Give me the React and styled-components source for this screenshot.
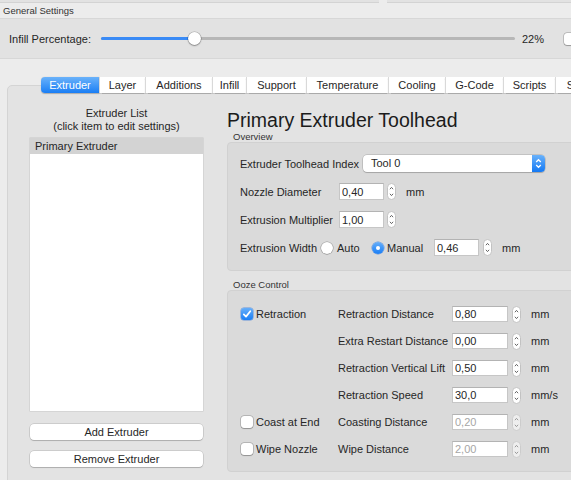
import React from 'react';
import styled, { createGlobalStyle } from 'styled-components';

const Global = createGlobalStyle`
  html, body { margin: 0; padding: 0; background: #ececec; overflow: hidden; }
  body { font-family: "Liberation Sans", Arial, sans-serif; font-size: 11px; color: #262626; }
  * { box-sizing: border-box; }
`;

const Window = styled.div`
  width: 571px;
  height: 480px;
  overflow: hidden;
  background: #ececec;
  display: flex;
  flex-direction: column;
`;

const TopStrip = styled.div`
  display: flex;
  gap: 8px;
  height: 3px;
  flex: none;
`;

const StripBox = styled.div`
  flex: ${p => (p.$w ? 'none' : '1')};
  width: ${p => (p.$w ? `${p.$w}px` : 'auto')};
  background: #e2e2e2;
  border-bottom: 1px solid #d3d3d3;
`;

const Caption = styled.div`
  font-size: 9.5px;
  line-height: ${p => p.$lh || 11}px;
  color: #333;
  padding-left: ${p => p.$pl || 0}px;
  margin-top: ${p => p.$mt || 0}px;
  flex: none;
  white-space: nowrap;
`;

const GeneralBox = styled.div`
  height: 41px;
  flex: none;
  background: #e2e2e2;
  border-top: 1px solid #d7d7d7;
  border-bottom: 1px solid #d7d7d7;
  display: flex;
  align-items: center;
  padding-left: 9px;
`;

const GenLabel = styled.div`
  width: 92px;
  flex: none;
  white-space: nowrap;
`;

const SliderTrack = styled.div`
  position: relative;
  width: 414px;
  height: 3px;
  flex: none;
  border-radius: 2px;
  background: #b7b7b7;
`;

const SliderFill = styled.div`
  height: 100%;
  border-radius: 2px;
  background: #3a8bf6;
`;

const SliderKnob = styled.div`
  position: absolute;
  top: -5px;
  width: 13px;
  height: 13px;
  margin-left: -6.5px;
  border-radius: 50%;
  background: #fff;
  box-shadow: 0 0 0 0.5px rgba(0, 0, 0, 0.25), 0 1px 1.5px rgba(0, 0, 0, 0.3);
`;

const Percent = styled.div`
  margin-left: 7px;
  width: 20px;
  flex: none;
`;

const PlainBox = styled.div`
  margin-left: 22px;
  width: 12px;
  height: 12px;
  flex: none;
  border-radius: 3px;
  background: #fff;
  box-shadow: 0 0 0 0.5px rgba(0, 0, 0, 0.3), 0 0.5px 1px rgba(0, 0, 0, 0.2);
`;

const Tabs = styled.div`
  display: flex;
  margin: 18px 0 -8px 41px;
  height: 16px;
  flex: none;
  position: relative;
  z-index: 1;
`;

const Tab = styled.div`
  width: ${p => p.$w}px;
  height: 16px;
  flex: none;
  display: flex;
  align-items: center;
  justify-content: center;
  white-space: nowrap;
  background: ${p => (p.$active ? 'linear-gradient(#6ab2fa, #1a7ef5)' : '#fff')};
  color: ${p => (p.$active ? '#fff' : '#262626')};
  border-left: ${p => (p.$active ? 'none' : '1px solid #d9d9d9')};
  box-shadow: 0 0.5px 1px rgba(0, 0, 0, 0.25);
  &:first-child {
    border-radius: 4px 0 0 4px;
  }
`;

const Panel = styled.div`
  margin-left: 7px;
  width: 640px;
  flex: 1 0 auto;
  min-height: 420px;
  background: #e3e3e3;
  border: 1px solid #d4d4d4;
  border-radius: 5px;
  display: grid;
  grid-template-columns: 173px 1fr;
  column-gap: 24px;
  align-items: start;
  padding: 21px 0 0 22px;
`;

const LeftCol = styled.div`
  display: flex;
  flex-direction: column;
`;

const ListTitle = styled.div`
  text-align: center;
  line-height: 13px;
`;

const ListBox = styled.div`
  margin-top: 5px;
  height: 273px;
  background: #fff;
  box-shadow: 0 0 0 0.5px rgba(0, 0, 0, 0.12);
`;

const ListItem = styled.div`
  height: 16px;
  line-height: 16px;
  padding-left: 5px;
  background: ${p => (p.$selected ? '#d3d3d3' : 'transparent')};
`;

const Button = styled.div`
  margin-top: ${p => p.$mt}px;
  height: 16px;
  line-height: 16px;
  text-align: center;
  background: #fff;
  border-radius: 4px;
  box-shadow: 0 0 0 0.5px rgba(0, 0, 0, 0.2), 0 1px 1px rgba(0, 0, 0, 0.15);
`;

const RightCol = styled.div`
  display: flex;
  flex-direction: column;
  min-width: 0;
`;

const Title = styled.div`
  margin-top: 2px;
  font-size: 19.5px;
  line-height: 22px;
  color: #1b1b1b;
  white-space: nowrap;
`;

const Group = styled.div`
  background: #dadada;
  border: 1px solid #d1d1d1;
  border-radius: 4px;
  display: flex;
  flex-direction: column;
  gap: 11px;
  padding: ${p => p.$pad};
`;

const Row = styled.div`
  display: flex;
  align-items: center;
  height: ${p => p.$h}px;
  white-space: nowrap;
`;

const Label = styled.div`
  width: ${p => (p.$w ? `${p.$w}px` : 'auto')};
  margin-left: ${p => p.$ml || 0}px;
  flex: none;
  white-space: nowrap;
`;

const Popup = styled.div`
  width: 182px;
  height: 17px;
  display: flex;
  background: #fff;
  border-radius: 4px;
  box-shadow: 0 0 0 0.5px rgba(0, 0, 0, 0.22), 0 1px 1px rgba(0, 0, 0, 0.15);
  overflow: hidden;
`;

const PopupText = styled.div`
  flex: 1;
  padding-left: 8px;
  line-height: 17px;
`;

const PopupArrow = styled.div`
  width: 13px;
  height: 17px;
  flex: none;
  background: linear-gradient(#69b1fa, #1479f4);
  display: flex;
`;

const NumInput = styled.input`
  width: ${p => p.$w}px;
  height: ${p => p.$h}px;
  flex: none;
  margin: 0 0 0 ${p => p.$ml || 0}px;
  padding: 0 0 0 2px;
  font: inherit;
  font-size: 11px;
  color: ${p => (p.disabled ? '#a6a6a6' : '#262626')};
  background: #fff;
  border: 1px solid #c6c6c6;
  border-top-color: #b3b3b3;
  border-radius: 0;
  outline: none;
`;

const StepperWrap = styled.div`
  margin-left: ${p => p.$ml}px;
  width: 9px;
  height: 17px;
  flex: none;
  display: flex;
  opacity: ${p => (p.$off ? 0.55 : 1)};
`;

const Unit = styled.div`
  margin-left: 10px;
  flex: none;
`;

const Radio = styled.div`
  width: 12px;
  height: 12px;
  flex: none;
  border-radius: 50%;
  display: flex;
  align-items: center;
  justify-content: center;
  background: ${p => (p.$on ? 'linear-gradient(#66aef9, #1a7ef5)' : '#fff')};
  box-shadow: ${p =>
    p.$on ? '0 0 0 0.5px rgba(20, 100, 220, 0.6)' : '0 0 0 0.5px rgba(0, 0, 0, 0.3), 0 0.5px 1px rgba(0, 0, 0, 0.2)'};
  &::after {
    content: '';
    display: ${p => (p.$on ? 'block' : 'none')};
    width: 4px;
    height: 4px;
    border-radius: 50%;
    background: #fff;
  }
`;

const CheckCell = styled.div`
  width: 97px;
  flex: none;
  display: flex;
  align-items: center;
  gap: 3px;
`;

const CheckBox = styled.div`
  width: 12px;
  height: 12px;
  flex: none;
  border-radius: 3px;
  display: flex;
  background: ${p => (p.$on ? 'linear-gradient(#66aef9, #1a7ef5)' : '#fff')};
  box-shadow: ${p =>
    p.$on ? '0 0 0 0.5px rgba(20, 100, 220, 0.6)' : '0 0 0 0.5px rgba(0, 0, 0, 0.3), 0 0.5px 1px rgba(0, 0, 0, 0.2)'};
`;

const Stepper = ({ ml, off }) => (
  <StepperWrap $ml={ml} $off={off}>
    <svg width="9" height="17" viewBox="0 0 9 17">
      <rect x="0.5" y="0.5" width="8" height="16" rx="4" fill="#fff" stroke="#c2c2c2" />
      <path d="M2.9 6.2 L4.5 4.4 L6.1 6.2" fill="none" stroke="#555" strokeWidth="0.9" />
      <path d="M2.9 10.8 L4.5 12.6 L6.1 10.8" fill="none" stroke="#555" strokeWidth="0.9" />
    </svg>
  </StepperWrap>
);

const Check = ({ on }) => (
  <CheckBox $on={on}>
    {on && (
      <svg width="12" height="12" viewBox="0 0 12 12">
        <path d="M2.8 6.3 L5 8.6 L9.3 3.2" fill="none" stroke="#fff" strokeWidth="1.7" strokeLinecap="round" strokeLinejoin="round" />
      </svg>
    )}
  </CheckBox>
);

const tabs = [
  ['Extruder', 58],
  ['Layer', 46],
  ['Additions', 67],
  ['Infill', 34],
  ['Support', 60],
  ['Temperature', 82],
  ['Cooling', 57],
  ['G-Code', 58],
  ['Scripts', 52],
  ['Speeds', 60],
];

const ooze = [
  { check: 'Retraction', on: true, label: 'Retraction Distance', value: '0,80', unit: 'mm' },
  { label: 'Extra Restart Distance', value: '0,00', unit: 'mm' },
  { label: 'Retraction Vertical Lift', value: '0,50', unit: 'mm' },
  { label: 'Retraction Speed', value: '30,0', unit: 'mm/s' },
  { check: 'Coast at End', on: false, label: 'Coasting Distance', value: '0,20', unit: 'mm', off: true },
  { check: 'Wipe Nozzle', on: false, label: 'Wipe Distance', value: '2,00', unit: 'mm', off: true },
];

export default function App() {
  const infill = 22.7;
  return (
    <Window>
      <Global />
      <TopStrip>
        <StripBox $w={379} />
        <StripBox />
      </TopStrip>
      <Caption $lh={15} $pl={3}>General Settings</Caption>
      <GeneralBox>
        <GenLabel>Infill Percentage:</GenLabel>
        <SliderTrack>
          <SliderFill style={{ width: `${infill}%` }} />
          <SliderKnob style={{ left: `${infill}%` }} />
        </SliderTrack>
        <Percent>22%</Percent>
        <PlainBox />
      </GeneralBox>

      <Tabs>
        {tabs.map(([name, w], i) => (
          <Tab key={name} $w={w} $active={i === 0}>{name}</Tab>
        ))}
      </Tabs>

      <Panel>
        <LeftCol>
          <ListTitle>
            Extruder List
            <br />
            (click item to edit settings)
          </ListTitle>
          <ListBox>
            <ListItem $selected>Primary Extruder</ListItem>
          </ListBox>
          <Button $mt={13}>Add Extruder</Button>
          <Button $mt={11}>Remove Extruder</Button>
        </LeftCol>

        <RightCol>
          <Title>Primary Extruder Toolhead</Title>
          <Caption $pl={6}>Overview</Caption>
          <Group $pad="12px 0 14px 12px">
            <Row $h={17}>
              <Label $w={123}>Extruder Toolhead Index</Label>
              <Popup>
                <PopupText>Tool 0</PopupText>
                <PopupArrow>
                  <svg width="13" height="17" viewBox="0 0 13 17">
                    <path d="M4.2 7 L6.5 4.7 L8.8 7" fill="none" stroke="#fff" strokeWidth="1.3" />
                    <path d="M4.2 10 L6.5 12.3 L8.8 10" fill="none" stroke="#fff" strokeWidth="1.3" />
                  </svg>
                </PopupArrow>
              </Popup>
            </Row>
            <Row $h={17}>
              <Label $w={99}>Nozzle Diameter</Label>
              <NumInput $w={45} $h={17} value="0,40" readOnly />
              <Stepper ml={3} />
              <Unit>mm</Unit>
            </Row>
            <Row $h={17}>
              <Label $w={99}>Extrusion Multiplier</Label>
              <NumInput $w={45} $h={17} value="1,00" readOnly />
              <Stepper ml={3} />
            </Row>
            <Row $h={17}>
              <Label $w={81}>Extrusion Width</Label>
              <Radio />
              <Label $w={35} $ml={4}>Auto</Label>
              <Radio $on />
              <Label $w={47} $ml={3}>Manual</Label>
              <NumInput $w={45} $h={17} value="0,46" readOnly />
              <Stepper ml={4} />
              <Unit>mm</Unit>
            </Row>
          </Group>

          <Caption $pl={6} $mt={8}>Ooze Control</Caption>
          <Group $pad="15px 0 14px 13px">
            {ooze.map(r => (
              <Row $h={16} key={r.label}>
                <CheckCell>
                  {r.check && (
                    <>
                      <Check on={r.on} />
                      <span>{r.check}</span>
                    </>
                  )}
                </CheckCell>
                <Label $w={114}>{r.label}</Label>
                <NumInput $w={56} $h={16} value={r.value} disabled={r.off} readOnly />
                <Stepper ml={4} off={r.off} />
                <Unit>{r.unit}</Unit>
              </Row>
            ))}
          </Group>
        </RightCol>
      </Panel>
    </Window>
  );
}
